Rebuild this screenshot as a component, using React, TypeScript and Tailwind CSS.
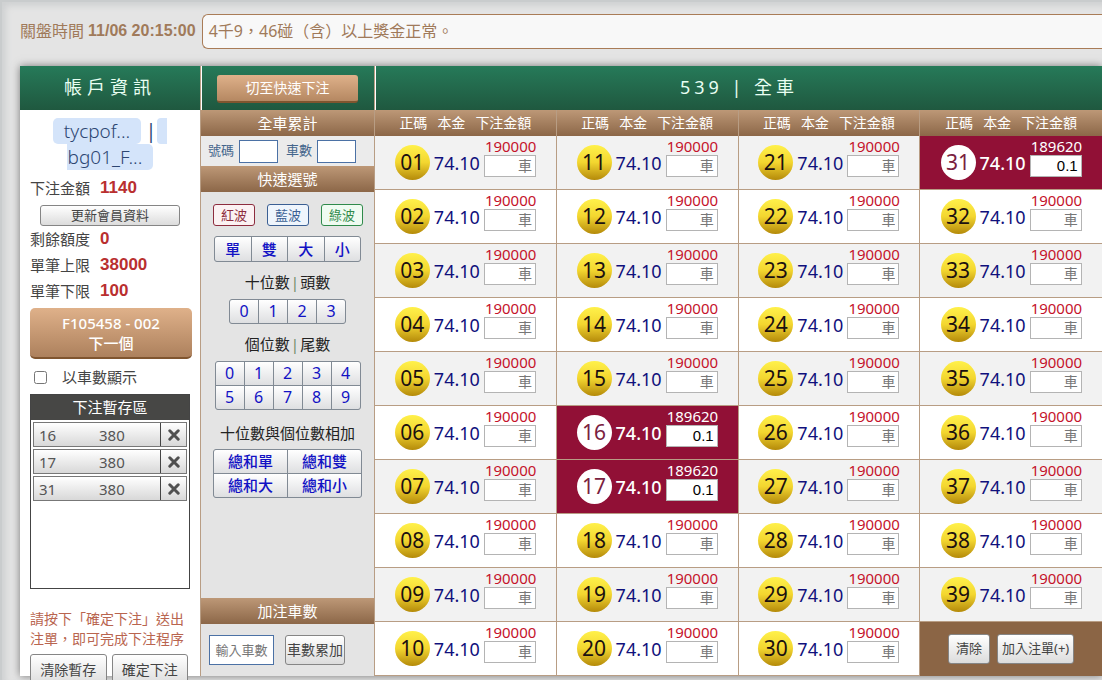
import React from 'react';
import clsx from 'clsx';

const ODDS = '74.10';
const picked = ['16', '17', '31'];

const rows = Array.from({ length: 10 }, (_, r) => [r + 1, r + 11, r + 21, r + 31]);

const limits = [
    { label: '剩餘額度', value: '0' },
    { label: '單筆上限', value: '38000' },
    { label: '單筆下限', value: '100' },
];

const grayButton = 'rounded-[3px] border border-[#858585] bg-linear-to-b from-white to-[#dcdcdc] text-[#444]';

function SectionBar({ children }: { children: React.ReactNode }) {
    return (
        <h3 className="h-[26px] bg-linear-to-b from-[#bd9877] to-[#8c6748] text-center text-[15px] leading-[26px] text-white">
            {children}
        </h3>
    );
}

function PickGroup({ items, className, itemClass }: { items: string[]; className: string; itemClass: string }) {
    return (
        <div className={clsx('mx-auto grid gap-px overflow-hidden rounded-[3px] border border-[#818a94] bg-[#818a94]', className)}>
            {items.map((item) => (
                <button key={item} className={clsx('bg-linear-to-b from-white to-[#dedfe1] text-[#1212c4]', itemClass)}>
                    {item}
                </button>
            ))}
        </div>
    );
}

function InfoRow({ label, value }: { label: string; value: string }) {
    return (
        <div className="flex h-[26px] items-center gap-[10px]">
            <span className="text-[15px] text-[#444]">{label}</span>
            <span className="font-['Liberation_Sans',Arial,sans-serif] text-[17px] font-bold text-[#b92f2f]">{value}</span>
        </div>
    );
}

function AccountPanel() {
    return (
        <aside className="border-r border-[#b89d84] bg-white">
            <h2 className="h-11 bg-linear-to-b from-[#267a59] to-[#1f583f] text-center text-lg leading-[42px] tracking-[5px] text-[#e9fff2]">
                帳戶資訊
            </h2>
            <div className="pr-2 pl-[10px]">
                <div className="flex flex-col pt-2 pl-[23px] text-[19px] leading-[26px] font-light text-[#2c4672]">
                    <div className="flex">
                        <span className="w-[88px] rounded-[5px] bg-[#d4e4fa] text-center">tycpof...</span>
                        <span className="w-4 pl-[4px] text-center font-normal">|</span>
                        <span className="w-[10px] rounded-l-[4px] bg-[#d4e4fa]" />
                    </div>
                    <span className="ml-[14px] w-[86px] rounded-r-[5px] bg-[#d4e4fa] pr-[10px] text-center">bg01_F...</span>
                </div>
                <div className="pt-[5px]">
                    <InfoRow label="下注金額" value="1140" />
                </div>
                <button className={clsx(grayButton, 'mt-1 ml-[10px] block h-[21px] w-[140px] text-[13px] leading-[19px]')}>
                    更新會員資料
                </button>
                {limits.map((limit) => (
                    <InfoRow key={limit.label} {...limit} />
                ))}
                <button className="mt-1 h-[51px] w-full rounded-[5px] border-b-2 border-[#80552f] bg-linear-to-b from-[#dfb18a] to-[#ad815d] text-[15px] leading-5 font-medium text-white">
                    F105458 - 002
                    <br />
                    下一個
                </button>
                <label className="mt-2 flex h-5 items-center gap-[15px] pl-1 text-[15px] text-[#444]">
                    <input type="checkbox" className="h-[13px] w-[13px]" />
                    以車數顯示
                </label>
                <div className="mt-[7px] mr-[2px] h-[195px] border border-[#444]">
                    <h3 className="h-[25px] bg-[#474745] text-center text-[15px] leading-[25px] text-white">下注暫存區</h3>
                    <ul className="flex flex-col gap-[2px] px-[2px] pt-[2px] text-[#555]">
                        {picked.map((n) => (
                            <li key={n} className="flex h-[25px] border border-[#777] bg-linear-to-b from-white to-[#d8d8d8] leading-6">
                                <span className="w-[65px] pl-[5px] text-[15px]">{n}</span>
                                <span className="flex-1 text-[15px]">380</span>
                                <button aria-label="刪除" className="flex w-[26px] items-center justify-center border-l border-[#444]">
                                    <svg viewBox="0 0 12 12" className="h-3 w-3" stroke="#505050" strokeWidth="3" strokeLinecap="round">
                                        <path d="M1.8 1.8 10.2 10.2M10.2 1.8 1.8 10.2" />
                                    </svg>
                                </button>
                            </li>
                        ))}
                    </ul>
                </div>
                <p className="mt-5 text-sm leading-5 text-[#b9654f]">
                    請按下「確定下注」送出
                    <br />
                    注單，即可完成下注程序
                </p>
                {/* the buttons hang over the lower edge of the panel */}
                <div className="relative mt-[5px] mr-1 -mb-4 grid grid-cols-2 gap-[5px] text-sm">
                    <button className={clsx(grayButton, 'h-8')}>清除暫存</button>
                    <button className={clsx(grayButton, 'h-8')}>確定下注</button>
                </div>
            </div>
        </aside>
    );
}

function QuickPanel() {
    return (
        <section className="flex flex-col border-r border-[#b89d84] bg-[#e4e4e4]">
            <div className="h-11 border-l border-white bg-linear-to-b from-[#267a59] to-[#1f583f] pt-[9px] pr-4 pl-[15px]">
                <button className="block h-7 w-full rounded-[3px] border-b-2 border-[#80552f] bg-linear-to-b from-[#dfb18a] to-[#b58862] text-sm text-white">
                    切至快速下注
                </button>
            </div>
            <SectionBar>全車累計</SectionBar>
            <div className="flex h-[30px] items-center bg-[#ebebeb] pl-[7px] text-[13px] text-[#44658c]">
                <label htmlFor="num">號碼</label>
                <input id="num" className="mr-2 ml-[5px] h-[23px] w-[39px] border border-[#4b71a5] bg-white" />
                <label htmlFor="cars">車數</label>
                <input id="cars" className="ml-[5px] h-[23px] w-[39px] border border-[#4b71a5] bg-white" />
            </div>
            <SectionBar>快速選號</SectionBar>
            <div className="flex gap-3 pt-3 pl-3 text-[13px] leading-5">
                <button className="h-[22px] w-[42px] rounded-[3px] border border-[#8d2c3e] bg-[#fbf2f3] text-[#8d2c3e]">紅波</button>
                <button className="h-[22px] w-[42px] rounded-[3px] border border-[#3b5f93] bg-[#eff5fc] text-[#3b5f93]">藍波</button>
                <button className="h-[22px] w-[42px] rounded-[3px] border border-[#2f8a4b] bg-[#effbf1] text-[#2f8a4b]">綠波</button>
            </div>
            <PickGroup items={['單', '雙', '大', '小']} className="mt-[10px] w-[147px] grid-cols-4" itemClass="h-6 text-[15px] leading-6 font-medium" />
            <p className="mt-2 text-center text-[15px] leading-6 text-[#222]">
                十位數<span className="mx-px text-[#6f8a68]">|</span>頭數
            </p>
            <PickGroup items={['0', '1', '2', '3']} className="mt-[5px] w-[117px] grid-cols-4" itemClass="h-[23px] text-base leading-[23px]" />
            <p className="mt-2 text-center text-[15px] leading-6 text-[#222]">
                個位數<span className="mx-px text-[#6f8a68]">|</span>尾數
            </p>
            <PickGroup
                items={['0', '1', '2', '3', '4', '5', '6', '7', '8', '9']}
                className="mt-[5px] w-[146px] grid-cols-5"
                itemClass="h-[23px] text-base leading-[23px]"
            />
            <p className="mt-[11px] text-center text-[15px] leading-6 text-[#222]">十位數與個位數相加</p>
            <PickGroup
                items={['總和單', '總和雙', '總和大', '總和小']}
                className="mt-1 w-[149px] grid-cols-2"
                itemClass="h-[23px] text-[15px] leading-[23px] font-medium"
            />
            <div className="mt-auto">
                <SectionBar>加注車數</SectionBar>
                <div className="flex h-[52px] items-center gap-[11px] pl-2">
                    <input
                        aria-label="加注車數"
                        placeholder="輸入車數"
                        className="h-[30px] w-[65px] border border-[#4b71a5] bg-white text-center text-[13px] placeholder:text-[#777]"
                    />
                    <button className={clsx(grayButton, 'h-[30px] w-[60px] text-sm')}>車數累加</button>
                </div>
            </div>
        </section>
    );
}

function BetCell({ n, odd }: { n: number; odd: boolean }) {
    const label = String(n).padStart(2, '0');
    const active = picked.includes(label);

    return (
        <td
            className={clsx(
                'h-[54px] border-r border-b border-[#b89d84] p-0 last:border-r-0',
                active ? 'bg-[#911036]' : odd ? 'bg-[#f2f2f2]' : 'bg-white',
            )}
        >
            <div className="flex items-center justify-center gap-1">
                <span
                    className={clsx(
                        'h-[35px] w-[35px] rounded-full text-center text-[21px] leading-[35px]',
                        active ? 'bg-white text-[#7a2140]' : 'bg-linear-to-b from-[#fff14a] via-[#f3d62f] to-[#b48a08] text-[#1b1010]',
                    )}
                >
                    {label}
                </span>
                <span className={clsx('text-lg', active ? 'font-medium text-white' : 'text-[#10107c]')}>{ODDS}</span>
                <div className="pb-2">
                    <div className={clsx('h-[15px] w-[52px] pl-px text-[15px] leading-[13px]', active ? 'text-white' : 'text-[#c5122b]')}>
                        {active ? '189620' : '190000'}
                    </div>
                    <input
                        aria-label={label}
                        placeholder="車"
                        defaultValue={active ? '0.1' : ''}
                        className="block h-[22px] w-[52px] border border-[#b4b4b4] bg-white pr-[3px] text-right font-['Liberation_Sans','Noto_Sans_CJK_TC',sans-serif] text-[15px] text-black placeholder:text-sm placeholder:text-[#777]"
                    />
                </div>
            </div>
        </td>
    );
}

function BetTable() {
    return (
        <main className="min-w-0">
            <h2 className="h-11 border-l border-white bg-linear-to-b from-[#267a59] to-[#1f583f] text-center text-lg leading-[42px] tracking-[4px] text-[#e9fff2]">
                539 | 全車
            </h2>
            <table className="w-full table-fixed border-separate border-spacing-0">
                <thead>
                    <tr>
                        {[0, 1, 2, 3].map((g) => (
                            <th
                                key={g}
                                className="h-[26px] border-r border-[#b89d84] bg-linear-to-b from-[#bd9877] to-[#8c6748] p-0 text-sm font-normal text-white last:border-r-0"
                            >
                                <div className="flex justify-center gap-[10px]">
                                    <span>正碼</span>
                                    <span>本金</span>
                                    <span>下注金額</span>
                                </div>
                            </th>
                        ))}
                    </tr>
                </thead>
                <tbody>
                    {rows.map((row, r) => (
                        <tr key={r}>
                            {row.map((n) =>
                                n < 40 ? (
                                    <BetCell key={n} n={n} odd={r % 2 === 0} />
                                ) : (
                                    <td key={n} className="h-[54px] bg-[#8b6545] p-0">
                                        <div className="flex justify-center gap-[7px] text-[13px]">
                                            <button className={clsx(grayButton, 'h-[30px] w-[42px]')}>清除</button>
                                            <button className={clsx(grayButton, 'h-[30px] w-[77px]')}>加入注單(+)</button>
                                        </div>
                                    </td>
                                ),
                            )}
                        </tr>
                    ))}
                </tbody>
            </table>
        </main>
    );
}

export default function App() {
    return (
        <div className="h-screen overflow-hidden border-t-2 border-l-2 border-[#c9cccd] bg-[#e4e4e4] pl-[18px] font-['Noto_Sans','Noto_Sans_CJK_TC',sans-serif] shadow-[inset_4px_4px_6px_#cfd1d2]">
            <header className="flex h-16 items-center gap-[6px] pb-[6px] text-[#a07a5a]">
                <div className="flex shrink-0 items-center gap-1 whitespace-nowrap">
                    <span className="text-base">關盤時間</span>
                    <time className="font-['Liberation_Sans',Arial,sans-serif] text-base font-bold">11/06 20:15:00</time>
                </div>
                <p className="h-[35px] flex-1 rounded-l-[6px] border border-r-0 border-[#a97c57] bg-[#f8f8f8] pl-[6px] text-base leading-[33px]">
                    4千9，46碰（含）以上獎金正常。
                </p>
            </header>
            <div className="grid h-[610px] grid-cols-[181px_174px_1fr] shadow-[0_0_8px_#777]">
                <AccountPanel />
                <QuickPanel />
                <BetTable />
            </div>
        </div>
    );
}
